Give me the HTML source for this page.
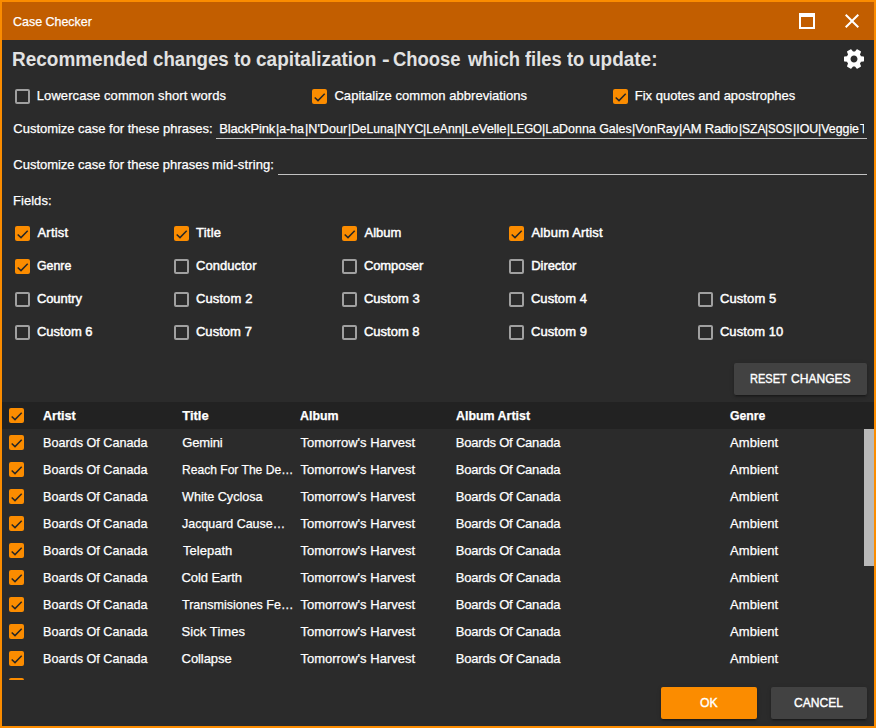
<!DOCTYPE html><html><head><meta charset="utf-8"><title>Case Checker</title><style>
html,body{margin:0;padding:0;}
body{width:876px;height:728px;overflow:hidden;background:#2b2b2b;font-family:"Liberation Sans",sans-serif;position:relative;}
.win{position:absolute;left:0;top:0;width:872px;height:724px;border:2px solid #fb8c00;background:#2b2b2b;}
.a{position:absolute;}
.bar{left:2px;top:2px;width:872px;height:38px;background:#c25e00;}
.t{position:absolute;white-space:nowrap;line-height:20px;height:20px;transform-origin:0 0;}
.cb{position:absolute;width:11px;height:11px;border:2px solid #a0a0a0;border-radius:2px;}
.cb.on{width:15px;height:15px;border:0;background:#fb8c00;border-radius:2px;}
.cb svg{position:absolute;left:0;top:0;}
.ul{position:absolute;height:1px;background:#c2c2c2;}
.btn{position:absolute;border-radius:2px;background:#424242;box-shadow:0 3px 1px -2px rgba(0,0,0,.2),0 2px 2px 0 rgba(0,0,0,.14),0 1px 5px 0 rgba(0,0,0,.12);}
.hdr{left:2px;top:402px;width:872px;height:27px;background:#222222;}
.sb{left:864px;top:429px;width:10px;height:137px;background:#b9b9b9;}
.clip{position:absolute;left:2px;top:429px;width:862px;height:251px;overflow:hidden;}
</style></head><body>
<div class="win"></div>
<div class="a bar"></div>
<svg class="a" style="left:799px;top:13px" width="16" height="16" viewBox="0 0 16 16"><path fill="#fff" d="M0 0h16v16h-16zM2 4v10h12v-10z" fill-rule="evenodd"/></svg>
<svg class="a" style="left:840px;top:9px" width="24" height="24" viewBox="0 0 24 24"><path fill="#fff" d="M19 6.41L17.59 5 12 10.59 6.41 5 5 6.41 10.59 12 5 17.59 6.41 19 12 13.41 17.590 19 19 17.59 13.41 12z"/></svg>
<svg class="a" style="left:842px;top:47px" width="24" height="24" viewBox="0 0 24 24"><path fill="#fff" transform="rotate(90 12 12)" d="M19.43 12.98c.04-.32.07-.64.07-.98s-.03-.66-.07-.98l2.110-1.650c.19-.15.24-.42.12-.64l-2-3.460c-.12-.22-.39-.3-.61-.22l-2.490 1c-.52-.4-1.080-.73-1.690-.98l-.38-2.650C14.460 2.180 14.250 2 14 2h-4c-.25 0-.46.18-.49.42l-.38 2.650c-.61.25-1.170.59-1.690.98l-2.490-1c-.23-.09-.49 0-.61.22l-2 3.460c-.13.22-.07.49.12.64l2.110 1.650c-.04.32-.07.65-.07.98s.03.66.07.98l-2.110 1.650c-.19.15-.24.42-.12.64l2 3.460c.12.22.39.3.61.22l2.490-1c.52.4 1.080.73 1.690.98l.38 2.650c.03.24.24.42.49.42h4c.25 0 .46-.18.49-.42l.38-2.650c.61-.25 1.170-.59 1.690-.98l2.490 1c.23.09.49 0 .61-.22l2-3.460c.12-.22.07-.49-.12-.64l-2.110-1.650zM12 15.500c-1.930 0-3.500-1.570-3.500-3.500s1.570-3.500 3.500-3.500 3.500 1.570 3.500 3.500-1.570 3.500-3.500 3.500z"/></svg>
<div class="ul" style="left:216px;top:138px;width:651px"></div>
<div class="ul" style="left:278px;top:174px;width:589px"></div>
<div class="btn" style="left:734px;top:363px;width:133px;height:32px"></div>
<div class="btn" style="left:661px;top:687px;width:96px;height:32px;background:#fb8c00"></div>
<div class="btn" style="left:771px;top:687px;width:96px;height:32px"></div>
<div class="a hdr"></div><div class="a sb"></div>
<div class="cb" style="left:15px;top:89px"></div>
<div class="cb on" style="left:312px;top:89px"><svg width="15" height="15" viewBox="0 0 15 15"><path d="M2.7 8.5L6 11.600 12.700 4.800" fill="none" stroke="#262626" stroke-width="1.500"/></svg></div>
<div class="cb on" style="left:613px;top:89px"><svg width="15" height="15" viewBox="0 0 15 15"><path d="M2.7 8.5L6 11.600 12.700 4.800" fill="none" stroke="#262626" stroke-width="1.500"/></svg></div>
<div class="cb on" style="left:15px;top:226px"><svg width="15" height="15" viewBox="0 0 15 15"><path d="M2.7 8.5L6 11.600 12.700 4.800" fill="none" stroke="#262626" stroke-width="1.500"/></svg></div>
<div class="cb on" style="left:174px;top:226px"><svg width="15" height="15" viewBox="0 0 15 15"><path d="M2.7 8.5L6 11.600 12.700 4.800" fill="none" stroke="#262626" stroke-width="1.500"/></svg></div>
<div class="cb on" style="left:342px;top:226px"><svg width="15" height="15" viewBox="0 0 15 15"><path d="M2.7 8.5L6 11.600 12.700 4.800" fill="none" stroke="#262626" stroke-width="1.500"/></svg></div>
<div class="cb on" style="left:509px;top:226px"><svg width="15" height="15" viewBox="0 0 15 15"><path d="M2.7 8.5L6 11.600 12.700 4.800" fill="none" stroke="#262626" stroke-width="1.500"/></svg></div>
<div class="cb on" style="left:15px;top:259px"><svg width="15" height="15" viewBox="0 0 15 15"><path d="M2.7 8.5L6 11.600 12.700 4.800" fill="none" stroke="#262626" stroke-width="1.500"/></svg></div>
<div class="cb" style="left:174px;top:259px"></div>
<div class="cb" style="left:342px;top:259px"></div>
<div class="cb" style="left:509px;top:259px"></div>
<div class="cb" style="left:15px;top:292px"></div>
<div class="cb" style="left:174px;top:292px"></div>
<div class="cb" style="left:342px;top:292px"></div>
<div class="cb" style="left:509px;top:292px"></div>
<div class="cb" style="left:698px;top:292px"></div>
<div class="cb" style="left:15px;top:325px"></div>
<div class="cb" style="left:174px;top:325px"></div>
<div class="cb" style="left:342px;top:325px"></div>
<div class="cb" style="left:509px;top:325px"></div>
<div class="cb" style="left:698px;top:325px"></div>
<div class="cb on" style="left:9px;top:408px"><svg width="15" height="15" viewBox="0 0 15 15"><path d="M2.7 8.5L6 11.600 12.700 4.800" fill="none" stroke="#262626" stroke-width="1.500"/></svg></div>
<div class="clip">
<div class="cb on" style="left:7px;top:6px"><svg width="15" height="15" viewBox="0 0 15 15"><path d="M2.7 8.5L6 11.600 12.700 4.800" fill="none" stroke="#262626" stroke-width="1.500"/></svg></div>
<div class="cb on" style="left:7px;top:33px"><svg width="15" height="15" viewBox="0 0 15 15"><path d="M2.7 8.5L6 11.600 12.700 4.800" fill="none" stroke="#262626" stroke-width="1.500"/></svg></div>
<div class="cb on" style="left:7px;top:60px"><svg width="15" height="15" viewBox="0 0 15 15"><path d="M2.7 8.5L6 11.600 12.700 4.800" fill="none" stroke="#262626" stroke-width="1.500"/></svg></div>
<div class="cb on" style="left:7px;top:87px"><svg width="15" height="15" viewBox="0 0 15 15"><path d="M2.7 8.5L6 11.600 12.700 4.800" fill="none" stroke="#262626" stroke-width="1.500"/></svg></div>
<div class="cb on" style="left:7px;top:114px"><svg width="15" height="15" viewBox="0 0 15 15"><path d="M2.7 8.5L6 11.600 12.700 4.800" fill="none" stroke="#262626" stroke-width="1.500"/></svg></div>
<div class="cb on" style="left:7px;top:141px"><svg width="15" height="15" viewBox="0 0 15 15"><path d="M2.7 8.5L6 11.600 12.700 4.800" fill="none" stroke="#262626" stroke-width="1.500"/></svg></div>
<div class="cb on" style="left:7px;top:168px"><svg width="15" height="15" viewBox="0 0 15 15"><path d="M2.7 8.5L6 11.600 12.700 4.800" fill="none" stroke="#262626" stroke-width="1.500"/></svg></div>
<div class="cb on" style="left:7px;top:195px"><svg width="15" height="15" viewBox="0 0 15 15"><path d="M2.7 8.5L6 11.600 12.700 4.800" fill="none" stroke="#262626" stroke-width="1.500"/></svg></div>
<div class="cb on" style="left:7px;top:222px"><svg width="15" height="15" viewBox="0 0 15 15"><path d="M2.7 8.5L6 11.600 12.700 4.800" fill="none" stroke="#262626" stroke-width="1.500"/></svg></div>
<div class="cb on" style="left:7px;top:249px"><svg width="15" height="15" viewBox="0 0 15 15"><path d="M2.7 8.5L6 11.600 12.700 4.800" fill="none" stroke="#262626" stroke-width="1.500"/></svg></div>
</div>
<span class="t" id="ttl" style="left:12.51px;top:11.50px;font-size:13px;font-weight:400;color:#fff;letter-spacing:0.000px;transform:scaleX(0.9579);-webkit-text-stroke:0.25px;">Case Checker</span>
<span class="t" id="hd0" style="left:12.34px;top:49.24px;font-size:19.5px;font-weight:700;color:#e2e2e2;letter-spacing:0.000px;transform:scaleX(0.9726);-webkit-text-stroke:0.00px;">Recommended</span>
<span class="t" id="hd1" style="left:152.83px;top:49.24px;font-size:19.5px;font-weight:700;color:#e2e2e2;letter-spacing:0.000px;transform:scaleX(0.9574);-webkit-text-stroke:0.00px;">changes</span>
<span class="t" id="hd2" style="left:234.44px;top:49.24px;font-size:19.5px;font-weight:700;color:#e2e2e2;letter-spacing:0.000px;transform:scaleX(0.9250);-webkit-text-stroke:0.00px;">to</span>
<span class="t" id="hd3" style="left:256.49px;top:49.24px;font-size:19.5px;font-weight:700;color:#e2e2e2;letter-spacing:0.000px;transform:scaleX(0.9741);-webkit-text-stroke:0.00px;">capitalization</span>
<span class="t" id="hd4" style="left:381.67px;top:49.24px;font-size:19.5px;font-weight:700;color:#e2e2e2;letter-spacing:0.000px;transform:scaleX(1.1778);-webkit-text-stroke:0.00px;">-</span>
<span class="t" id="hd5" style="left:393.34px;top:49.24px;font-size:19.5px;font-weight:700;color:#e2e2e2;letter-spacing:0.000px;transform:scaleX(0.9449);-webkit-text-stroke:0.00px;">Choose</span>
<span class="t" id="hd6" style="left:467.60px;top:49.24px;font-size:19.5px;font-weight:700;color:#e2e2e2;letter-spacing:0.000px;transform:scaleX(0.9430);-webkit-text-stroke:0.00px;">which</span>
<span class="t" id="hd7" style="left:524.56px;top:49.24px;font-size:19.5px;font-weight:700;color:#e2e2e2;letter-spacing:0.000px;transform:scaleX(0.9365);-webkit-text-stroke:0.00px;">files</span>
<span class="t" id="hd8" style="left:566.72px;top:49.24px;font-size:19.5px;font-weight:700;color:#e2e2e2;letter-spacing:0.000px;transform:scaleX(0.9387);-webkit-text-stroke:0.00px;">to</span>
<span class="t" id="hd9" style="left:589.28px;top:49.24px;font-size:19.5px;font-weight:700;color:#e2e2e2;letter-spacing:0.000px;transform:scaleX(0.9725);-webkit-text-stroke:0.00px;">update:</span>
<span class="t" id="o1" style="left:36.78px;top:85.50px;font-size:13px;font-weight:400;color:#fff;letter-spacing:0.079px;-webkit-text-stroke:0.25px;">Lowercase common short words</span>
<span class="t" id="o2" style="left:334.45px;top:85.50px;font-size:13px;font-weight:400;color:#fff;letter-spacing:0.035px;-webkit-text-stroke:0.25px;">Capitalize common abbreviations</span>
<span class="t" id="o3" style="left:634.78px;top:85.50px;font-size:13px;font-weight:400;color:#fff;letter-spacing:-0.001px;-webkit-text-stroke:0.25px;">Fix quotes and apostrophes</span>
<span class="t" id="c1" style="left:13.37px;top:118.50px;font-size:13px;font-weight:400;color:#fff;letter-spacing:-0.027px;-webkit-text-stroke:0.25px;">Customize case for these phrases:</span>
<span class="t" id="p0" style="left:219.14px;top:118.50px;font-size:13px;font-weight:400;color:#fff;letter-spacing:-0.104px;-webkit-text-stroke:0.25px;">BlackPink</span>
<span class="t" id="p1" style="left:275.59px;top:118.50px;font-size:13px;font-weight:400;color:#fff;letter-spacing:0.000px;transform:scaleX(0.9498);-webkit-text-stroke:0.25px;">|a-ha</span>
<span class="t" id="p2" style="left:304.68px;top:118.50px;font-size:13px;font-weight:400;color:#fff;letter-spacing:0.000px;transform:scaleX(0.9740);-webkit-text-stroke:0.25px;">|N'Dour</span>
<span class="t" id="p3" style="left:347.68px;top:118.50px;font-size:13px;font-weight:400;color:#fff;letter-spacing:0.000px;transform:scaleX(0.9279);-webkit-text-stroke:0.25px;">|DeLuna</span>
<span class="t" id="p4" style="left:393.76px;top:118.50px;font-size:13px;font-weight:400;color:#fff;letter-spacing:0.000px;transform:scaleX(0.9561);-webkit-text-stroke:0.25px;">|NYC</span>
<span class="t" id="p5" style="left:423.37px;top:118.50px;font-size:13px;font-weight:400;color:#fff;letter-spacing:0.000px;transform:scaleX(0.9415);-webkit-text-stroke:0.25px;">|LeAnn</span>
<span class="t" id="p6" style="left:461.29px;top:118.50px;font-size:13px;font-weight:400;color:#fff;letter-spacing:-0.105px;-webkit-text-stroke:0.25px;">|LeVelle</span>
<span class="t" id="p7" style="left:506.67px;top:118.50px;font-size:13px;font-weight:400;color:#fff;letter-spacing:0.000px;transform:scaleX(0.8889);-webkit-text-stroke:0.25px;">|LEGO</span>
<span class="t" id="p8" style="left:541.59px;top:118.50px;font-size:13px;font-weight:400;color:#fff;letter-spacing:0.000px;transform:scaleX(0.9566);-webkit-text-stroke:0.25px;">|LaDonna Gales</span>
<span class="t" id="p9" style="left:631.85px;top:118.50px;font-size:13px;font-weight:400;color:#fff;letter-spacing:0.000px;transform:scaleX(0.9601);-webkit-text-stroke:0.25px;">|VonRay</span>
<span class="t" id="p10" style="left:678.99px;top:118.50px;font-size:13px;font-weight:400;color:#fff;letter-spacing:-0.175px;-webkit-text-stroke:0.25px;">|AM Radio</span>
<span class="t" id="p11" style="left:738.75px;top:118.50px;font-size:13px;font-weight:400;color:#fff;letter-spacing:0.000px;transform:scaleX(0.9217);-webkit-text-stroke:0.25px;">|SZA</span>
<span class="t" id="p12" style="left:765.20px;top:118.50px;font-size:13px;font-weight:400;color:#fff;letter-spacing:0.000px;transform:scaleX(0.8833);-webkit-text-stroke:0.25px;">|SOS</span>
<span class="t" id="p13" style="left:792.91px;top:118.50px;font-size:13px;font-weight:400;color:#fff;letter-spacing:0.000px;transform:scaleX(0.9539);-webkit-text-stroke:0.25px;">|IOU</span>
<span class="t" id="p14" style="left:818.28px;top:118.50px;font-size:13px;font-weight:400;color:#fff;letter-spacing:0.000px;transform:scaleX(0.9502);-webkit-text-stroke:0.25px;">|Veggie</span>
<span class="t" id="pT" style="left:859.94px;top:118.50px;font-size:13px;font-weight:400;color:#fff;letter-spacing:0.000px;transform:scaleX(0.9047);-webkit-text-stroke:0.25px;">T</span>
<span class="t" id="c2" style="left:13.37px;top:154.50px;font-size:13px;font-weight:400;color:#fff;letter-spacing:-0.032px;-webkit-text-stroke:0.25px;">Customize case for these phrases</span>
<span class="t" id="c2b" style="left:212.00px;top:154.50px;font-size:13px;font-weight:400;color:#fff;letter-spacing:0.130px;-webkit-text-stroke:0.25px;">mid-string:</span>
<span class="t" id="fl" style="left:12.94px;top:190.50px;font-size:13px;font-weight:400;color:#fff;letter-spacing:0.056px;-webkit-text-stroke:0.25px;">Fields:</span>
<span class="t" id="f00" style="left:37.46px;top:222.50px;font-size:13px;font-weight:400;color:#fff;letter-spacing:0.214px;-webkit-text-stroke:0.45px;">Artist</span>
<span class="t" id="f01" style="left:195.93px;top:222.50px;font-size:13px;font-weight:400;color:#fff;letter-spacing:0.275px;-webkit-text-stroke:0.45px;">Title</span>
<span class="t" id="f02" style="left:364.46px;top:222.50px;font-size:13px;font-weight:400;color:#fff;letter-spacing:0.001px;-webkit-text-stroke:0.45px;">Album</span>
<span class="t" id="f03" style="left:531.46px;top:222.50px;font-size:13px;font-weight:400;color:#fff;letter-spacing:0.166px;-webkit-text-stroke:0.45px;">Album Artist</span>
<span class="t" id="f10" style="left:36.57px;top:255.50px;font-size:13px;font-weight:400;color:#fff;letter-spacing:0.000px;transform:scaleX(0.9510);-webkit-text-stroke:0.45px;">Genre</span>
<span class="t" id="f11" style="left:195.93px;top:255.50px;font-size:13px;font-weight:400;color:#fff;letter-spacing:0.074px;-webkit-text-stroke:0.45px;">Conductor</span>
<span class="t" id="f12" style="left:363.93px;top:255.50px;font-size:13px;font-weight:400;color:#fff;letter-spacing:-0.085px;-webkit-text-stroke:0.45px;">Composer</span>
<span class="t" id="f13" style="left:531.28px;top:255.50px;font-size:13px;font-weight:400;color:#fff;letter-spacing:-0.078px;-webkit-text-stroke:0.45px;">Director</span>
<span class="t" id="f20" style="left:36.93px;top:288.50px;font-size:13px;font-weight:400;color:#fff;letter-spacing:-0.085px;-webkit-text-stroke:0.45px;">Country</span>
<span class="t" id="f21" style="left:195.93px;top:288.50px;font-size:13px;font-weight:400;color:#fff;letter-spacing:0.117px;-webkit-text-stroke:0.45px;">Custom 2</span>
<span class="t" id="f22" style="left:363.93px;top:288.50px;font-size:13px;font-weight:400;color:#fff;letter-spacing:0.019px;-webkit-text-stroke:0.45px;">Custom 3</span>
<span class="t" id="f23" style="left:530.93px;top:288.50px;font-size:13px;font-weight:400;color:#fff;letter-spacing:0.049px;-webkit-text-stroke:0.45px;">Custom 4</span>
<span class="t" id="f24" style="left:719.93px;top:288.50px;font-size:13px;font-weight:400;color:#fff;letter-spacing:0.099px;-webkit-text-stroke:0.45px;">Custom 5</span>
<span class="t" id="f30" style="left:36.93px;top:321.50px;font-size:13px;font-weight:400;color:#fff;letter-spacing:0.005px;-webkit-text-stroke:0.45px;">Custom 6</span>
<span class="t" id="f31" style="left:195.93px;top:321.50px;font-size:13px;font-weight:400;color:#fff;letter-spacing:0.046px;-webkit-text-stroke:0.45px;">Custom 7</span>
<span class="t" id="f32" style="left:363.93px;top:321.50px;font-size:13px;font-weight:400;color:#fff;letter-spacing:0.003px;-webkit-text-stroke:0.45px;">Custom 8</span>
<span class="t" id="f33" style="left:530.93px;top:321.50px;font-size:13px;font-weight:400;color:#fff;letter-spacing:0.077px;-webkit-text-stroke:0.45px;">Custom 9</span>
<span class="t" id="f34" style="left:719.93px;top:321.50px;font-size:13px;font-weight:400;color:#fff;letter-spacing:0.057px;-webkit-text-stroke:0.45px;">Custom 10</span>
<span class="t" id="rs1" style="left:749.50px;top:368.82px;font-size:13.5px;font-weight:400;color:#fff;letter-spacing:0.000px;transform:scaleX(0.8169);-webkit-text-stroke:0.40px;">RESET</span>
<span class="t" id="rs2" style="left:791.26px;top:368.82px;font-size:13.5px;font-weight:400;color:#fff;letter-spacing:0.000px;transform:scaleX(0.8937);-webkit-text-stroke:0.40px;">CHANGES</span>
<span class="t" id="h0" style="left:42.84px;top:405.50px;font-size:13px;font-weight:700;color:#fff;letter-spacing:0.000px;transform:scaleX(0.9646);-webkit-text-stroke:0.25px;">Artist</span>
<span class="t" id="h1" style="left:182.25px;top:405.50px;font-size:13px;font-weight:700;color:#fff;letter-spacing:-0.027px;-webkit-text-stroke:0.25px;">Title</span>
<span class="t" id="h2" style="left:299.81px;top:405.50px;font-size:13px;font-weight:700;color:#fff;letter-spacing:0.000px;transform:scaleX(0.9537);-webkit-text-stroke:0.25px;">Album</span>
<span class="t" id="h3" style="left:455.78px;top:405.50px;font-size:13px;font-weight:700;color:#fff;letter-spacing:0.000px;transform:scaleX(0.9548);-webkit-text-stroke:0.25px;">Album Artist</span>
<span class="t" id="h4" style="left:729.66px;top:405.50px;font-size:13px;font-weight:700;color:#fff;letter-spacing:0.000px;transform:scaleX(0.9420);-webkit-text-stroke:0.25px;">Genre</span>
<span class="t" id="r0a" style="left:42.68px;top:432.50px;font-size:13px;font-weight:400;color:#fff;letter-spacing:0.000px;transform:scaleX(0.9702);-webkit-text-stroke:0.25px;">Boards Of Canada</span>
<span class="t" id="r0t" style="left:182.15px;top:432.50px;font-size:13px;font-weight:400;color:#fff;letter-spacing:-0.123px;-webkit-text-stroke:0.25px;">Gemini</span>
<span class="t" id="r0l" style="left:300.42px;top:432.50px;font-size:13px;font-weight:400;color:#fff;letter-spacing:0.016px;-webkit-text-stroke:0.25px;">Tomorrow's Harvest</span>
<span class="t" id="r0b" style="left:455.86px;top:432.50px;font-size:13px;font-weight:400;color:#fff;letter-spacing:-0.208px;-webkit-text-stroke:0.25px;">Boards Of Canada</span>
<span class="t" id="r0g" style="left:730.00px;top:432.50px;font-size:13px;font-weight:400;color:#fff;letter-spacing:0.084px;-webkit-text-stroke:0.25px;">Ambient</span>
<span class="t" id="r1a" style="left:42.68px;top:459.50px;font-size:13px;font-weight:400;color:#fff;letter-spacing:0.000px;transform:scaleX(0.9702);-webkit-text-stroke:0.25px;">Boards Of Canada</span>
<span class="t" id="r1t" style="left:181.94px;top:459.50px;font-size:13px;font-weight:400;color:#fff;letter-spacing:0.000px;transform:scaleX(0.9291);-webkit-text-stroke:0.25px;">Reach For The De…</span>
<span class="t" id="r1l" style="left:300.42px;top:459.50px;font-size:13px;font-weight:400;color:#fff;letter-spacing:0.016px;-webkit-text-stroke:0.25px;">Tomorrow's Harvest</span>
<span class="t" id="r1b" style="left:455.86px;top:459.50px;font-size:13px;font-weight:400;color:#fff;letter-spacing:-0.208px;-webkit-text-stroke:0.25px;">Boards Of Canada</span>
<span class="t" id="r1g" style="left:730.00px;top:459.50px;font-size:13px;font-weight:400;color:#fff;letter-spacing:0.084px;-webkit-text-stroke:0.25px;">Ambient</span>
<span class="t" id="r2a" style="left:42.68px;top:486.50px;font-size:13px;font-weight:400;color:#fff;letter-spacing:0.000px;transform:scaleX(0.9702);-webkit-text-stroke:0.25px;">Boards Of Canada</span>
<span class="t" id="r2t" style="left:182.18px;top:486.50px;font-size:13px;font-weight:400;color:#fff;letter-spacing:0.000px;transform:scaleX(0.9702);-webkit-text-stroke:0.25px;">White Cyclosa</span>
<span class="t" id="r2l" style="left:300.42px;top:486.50px;font-size:13px;font-weight:400;color:#fff;letter-spacing:0.016px;-webkit-text-stroke:0.25px;">Tomorrow's Harvest</span>
<span class="t" id="r2b" style="left:455.86px;top:486.50px;font-size:13px;font-weight:400;color:#fff;letter-spacing:-0.208px;-webkit-text-stroke:0.25px;">Boards Of Canada</span>
<span class="t" id="r2g" style="left:730.00px;top:486.50px;font-size:13px;font-weight:400;color:#fff;letter-spacing:0.084px;-webkit-text-stroke:0.25px;">Ambient</span>
<span class="t" id="r3a" style="left:42.68px;top:513.50px;font-size:13px;font-weight:400;color:#fff;letter-spacing:0.000px;transform:scaleX(0.9702);-webkit-text-stroke:0.25px;">Boards Of Canada</span>
<span class="t" id="r3t" style="left:181.50px;top:513.50px;font-size:13px;font-weight:400;color:#fff;letter-spacing:0.000px;transform:scaleX(0.9579);-webkit-text-stroke:0.25px;">Jacquard Cause…</span>
<span class="t" id="r3l" style="left:300.42px;top:513.50px;font-size:13px;font-weight:400;color:#fff;letter-spacing:0.016px;-webkit-text-stroke:0.25px;">Tomorrow's Harvest</span>
<span class="t" id="r3b" style="left:455.86px;top:513.50px;font-size:13px;font-weight:400;color:#fff;letter-spacing:-0.208px;-webkit-text-stroke:0.25px;">Boards Of Canada</span>
<span class="t" id="r3g" style="left:730.00px;top:513.50px;font-size:13px;font-weight:400;color:#fff;letter-spacing:0.084px;-webkit-text-stroke:0.25px;">Ambient</span>
<span class="t" id="r4a" style="left:42.68px;top:540.50px;font-size:13px;font-weight:400;color:#fff;letter-spacing:0.000px;transform:scaleX(0.9702);-webkit-text-stroke:0.25px;">Boards Of Canada</span>
<span class="t" id="r4t" style="left:182.91px;top:540.50px;font-size:13px;font-weight:400;color:#fff;letter-spacing:0.034px;-webkit-text-stroke:0.25px;">Telepath</span>
<span class="t" id="r4l" style="left:300.42px;top:540.50px;font-size:13px;font-weight:400;color:#fff;letter-spacing:0.016px;-webkit-text-stroke:0.25px;">Tomorrow's Harvest</span>
<span class="t" id="r4b" style="left:455.86px;top:540.50px;font-size:13px;font-weight:400;color:#fff;letter-spacing:-0.208px;-webkit-text-stroke:0.25px;">Boards Of Canada</span>
<span class="t" id="r4g" style="left:730.00px;top:540.50px;font-size:13px;font-weight:400;color:#fff;letter-spacing:0.084px;-webkit-text-stroke:0.25px;">Ambient</span>
<span class="t" id="r5a" style="left:42.68px;top:567.50px;font-size:13px;font-weight:400;color:#fff;letter-spacing:0.000px;transform:scaleX(0.9702);-webkit-text-stroke:0.25px;">Boards Of Canada</span>
<span class="t" id="r5t" style="left:181.59px;top:567.50px;font-size:13px;font-weight:400;color:#fff;letter-spacing:-0.106px;-webkit-text-stroke:0.25px;">Cold Earth</span>
<span class="t" id="r5l" style="left:300.42px;top:567.50px;font-size:13px;font-weight:400;color:#fff;letter-spacing:0.016px;-webkit-text-stroke:0.25px;">Tomorrow's Harvest</span>
<span class="t" id="r5b" style="left:455.86px;top:567.50px;font-size:13px;font-weight:400;color:#fff;letter-spacing:-0.208px;-webkit-text-stroke:0.25px;">Boards Of Canada</span>
<span class="t" id="r5g" style="left:730.00px;top:567.50px;font-size:13px;font-weight:400;color:#fff;letter-spacing:0.084px;-webkit-text-stroke:0.25px;">Ambient</span>
<span class="t" id="r6a" style="left:42.68px;top:594.50px;font-size:13px;font-weight:400;color:#fff;letter-spacing:0.000px;transform:scaleX(0.9702);-webkit-text-stroke:0.25px;">Boards Of Canada</span>
<span class="t" id="r6t" style="left:181.99px;top:594.50px;font-size:13px;font-weight:400;color:#fff;letter-spacing:0.000px;transform:scaleX(0.9618);-webkit-text-stroke:0.25px;">Transmisiones Fe…</span>
<span class="t" id="r6l" style="left:300.42px;top:594.50px;font-size:13px;font-weight:400;color:#fff;letter-spacing:0.016px;-webkit-text-stroke:0.25px;">Tomorrow's Harvest</span>
<span class="t" id="r6b" style="left:455.86px;top:594.50px;font-size:13px;font-weight:400;color:#fff;letter-spacing:-0.208px;-webkit-text-stroke:0.25px;">Boards Of Canada</span>
<span class="t" id="r6g" style="left:730.00px;top:594.50px;font-size:13px;font-weight:400;color:#fff;letter-spacing:0.084px;-webkit-text-stroke:0.25px;">Ambient</span>
<span class="t" id="r7a" style="left:42.68px;top:621.50px;font-size:13px;font-weight:400;color:#fff;letter-spacing:0.000px;transform:scaleX(0.9702);-webkit-text-stroke:0.25px;">Boards Of Canada</span>
<span class="t" id="r7t" style="left:181.50px;top:621.50px;font-size:13px;font-weight:400;color:#fff;letter-spacing:0.081px;-webkit-text-stroke:0.25px;">Sick Times</span>
<span class="t" id="r7l" style="left:300.42px;top:621.50px;font-size:13px;font-weight:400;color:#fff;letter-spacing:0.016px;-webkit-text-stroke:0.25px;">Tomorrow's Harvest</span>
<span class="t" id="r7b" style="left:455.86px;top:621.50px;font-size:13px;font-weight:400;color:#fff;letter-spacing:-0.208px;-webkit-text-stroke:0.25px;">Boards Of Canada</span>
<span class="t" id="r7g" style="left:730.00px;top:621.50px;font-size:13px;font-weight:400;color:#fff;letter-spacing:0.084px;-webkit-text-stroke:0.25px;">Ambient</span>
<span class="t" id="r8a" style="left:42.68px;top:648.50px;font-size:13px;font-weight:400;color:#fff;letter-spacing:0.000px;transform:scaleX(0.9702);-webkit-text-stroke:0.25px;">Boards Of Canada</span>
<span class="t" id="r8t" style="left:181.59px;top:648.50px;font-size:13px;font-weight:400;color:#fff;letter-spacing:-0.072px;-webkit-text-stroke:0.25px;">Collapse</span>
<span class="t" id="r8l" style="left:300.42px;top:648.50px;font-size:13px;font-weight:400;color:#fff;letter-spacing:0.016px;-webkit-text-stroke:0.25px;">Tomorrow's Harvest</span>
<span class="t" id="r8b" style="left:455.86px;top:648.50px;font-size:13px;font-weight:400;color:#fff;letter-spacing:-0.208px;-webkit-text-stroke:0.25px;">Boards Of Canada</span>
<span class="t" id="r8g" style="left:730.00px;top:648.50px;font-size:13px;font-weight:400;color:#fff;letter-spacing:0.084px;-webkit-text-stroke:0.25px;">Ambient</span>
<span class="t" id="ok" style="left:700.21px;top:692.82px;font-size:13.5px;font-weight:400;color:#fff;letter-spacing:0.000px;transform:scaleX(0.9076);-webkit-text-stroke:0.40px;">OK</span>
<span class="t" id="cn" style="left:794.33px;top:692.82px;font-size:13.5px;font-weight:400;color:#fff;letter-spacing:0.000px;transform:scaleX(0.8948);-webkit-text-stroke:0.40px;">CANCEL</span>
<div class="a" style="left:864px;top:119px;width:10px;height:19px;background:#2b2b2b"></div>
</body></html>
